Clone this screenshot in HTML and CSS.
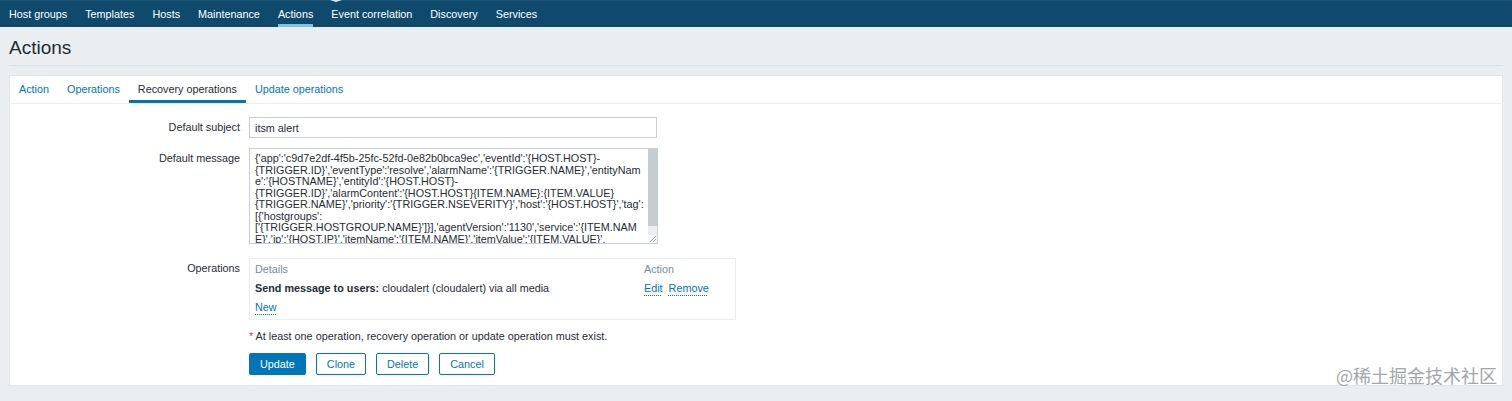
FILE: index.html
```html
<!DOCTYPE html>
<html lang="en">
<head>
<meta charset="utf-8">
<title>Actions</title>
<link rel="stylesheet" href="styles.css">
</head>
<body>
<header class="topnav">
  <span class="topnav-notch"></span>
  <nav class="topnav-list">
    <a class="topnav-item">Host groups</a>
    <a class="topnav-item">Templates</a>
    <a class="topnav-item">Hosts</a>
    <a class="topnav-item">Maintenance</a>
    <a class="topnav-item is-active">Actions</a>
    <a class="topnav-item">Event correlation</a>
    <a class="topnav-item">Discovery</a>
    <a class="topnav-item">Services</a>
  </nav>
</header>

<div class="page-header">
  <h1 class="page-title">Actions</h1>
</div>

<main class="panel">
  <ul class="tabs">
    <li class="tab">Action</li>
    <li class="tab">Operations</li>
    <li class="tab is-active">Recovery operations</li>
    <li class="tab">Update operations</li>
  </ul>

  <form class="form">
    <div class="form-row">
      <label class="form-label">Default subject</label>
      <div class="form-field"><input class="text-input" type="text" value="itsm alert"></div>
    </div>
    <div class="form-row row-message">
      <label class="form-label">Default message</label>
      <div class="form-field">
        <div class="textbox">
          <textarea class="text-area" spellcheck="false">{'app':'c9d7e2df-4f5b-25fc-52fd-0e82b0bca9ec','eventId':'{HOST.HOST}-
{TRIGGER.ID}','eventType':'resolve','alarmName':'{TRIGGER.NAME}','entityNam
e':'{HOSTNAME}','entityId':'{HOST.HOST}-
{TRIGGER.ID}','alarmContent':'{HOST.HOST}{ITEM.NAME}:{ITEM.VALUE}
{TRIGGER.NAME}','priority':'{TRIGGER.NSEVERITY}','host':'{HOST.HOST}','tag':
[{'hostgroups':
['{TRIGGER.HOSTGROUP.NAME}']}],'agentVersion':'1130','service':'{ITEM.NAM
E}','ip':'{HOST.IP}','itemName':'{ITEM.NAME}','itemValue':'{ITEM.VALUE}',
'time':'{EVENT.RECOVERY.DATE} {EVENT.RECOVERY.TIME}'}</textarea>
          <div class="scrollbar">
            <div class="scroll-thumb"></div>
            <div class="scroll-track"></div>
            <svg class="grip" width="9" height="8" viewBox="0 0 9 8">
              <path d="M8 1 L2 7 M8 4 L5 7" stroke="#9aa4aa" stroke-width="1" fill="none"/>
            </svg>
          </div>
        </div>
      </div>
    </div>
    <div class="form-row row-ops">
      <label class="form-label">Operations</label>
      <div class="form-field">
        <div class="ops-box">
          <div class="ops-line ops-head">
            <span class="ops-details">Details</span>
            <span class="ops-action">Action</span>
          </div>
          <div class="ops-line">
            <span class="ops-details"><b>Send message to users:</b> cloudalert (cloudalert) via all media</span>
            <span class="ops-action"><a class="link">Edit</a><a class="link">Remove</a></span>
          </div>
          <div class="ops-line">
            <span class="ops-details"><a class="link">New</a></span>
          </div>
        </div>
      </div>
    </div>
    <div class="form-row row-note">
      <span class="form-label"></span>
      <div class="form-field note"><span class="asterisk">*</span> At least one operation, recovery operation or update operation must exist.</div>
    </div>
    <div class="form-row row-buttons">
      <span class="form-label"></span>
      <div class="form-field buttons">
        <button type="button" class="btn btn-primary">Update</button>
        <button type="button" class="btn">Clone</button>
        <button type="button" class="btn">Delete</button>
        <button type="button" class="btn">Cancel</button>
      </div>
    </div>
  </form>
  <div class="watermark">@稀土掘金技术社区</div>
</main>
</body>
</html>
```

FILE: styles.css
```css
* { box-sizing: border-box; }

html, body {
  margin: 0;
  padding: 0;
}

body {
  background: #ebeef0;
  color: #1f2c33;
  font-family: "Liberation Sans", Arial, Helvetica, sans-serif;
  font-size: 10.8px;
  width: 1512px;
  height: 401px;
  overflow: hidden;
}

/* top navigation */
.topnav {
  position: relative;
  height: 27px;
  background: #0f4a6c;
  border-top: 1px solid #1a5374;
}

.topnav-notch {
  position: absolute;
  top: -1px;
  left: 330px;
  width: 0;
  height: 0;
  border-left: 6px solid transparent;
  border-right: 6px solid transparent;
  border-top: 2px solid #dfe6ea;
}

.topnav-list {
  display: flex;
  gap: 18px;
  padding-left: 9px;
  height: 100%;
}

.topnav-item {
  color: #ffffff;
  line-height: 26px;
  height: 26px;
  white-space: nowrap;
}

.topnav-item.is-active {
  box-shadow: inset 0 -3px 0 #7cc2e6;
}

/* page header */
.page-header {
  margin: 0 9px;
  height: 39px;
  border-bottom: 1px solid #dde2e5;
  display: flex;
  align-items: center;
}

.page-title {
  margin: 0;
  font-size: 19px;
  font-weight: normal;
  color: #1f2c33;
  line-height: 22px;
  padding-top: 3px;
}

/* panel */
.panel {
  position: relative;
  margin: 9px 9px 0;
  background: #ffffff;
  border: 1px solid #e2e6e9;
  height: 311px;
}

.tabs {
  list-style: none;
  margin: 0;
  padding: 0;
  display: flex;
  height: 28px;
  border-bottom: 1px solid #ebeef0;
}

.tab {
  padding: 0 9px;
  line-height: 27px;
  color: #0275b8;
  white-space: nowrap;
}

.tab.is-active {
  color: #1f2c33;
  box-shadow: inset 0 -3px 0 #0275b8;
  height: 27px;
}

/* form */
.form {
  padding-top: 13px;
}

.form-row {
  display: flex;
  gap: 9px;
  margin-bottom: 10px;
}

.form-label {
  width: 230px;
  flex: none;
  text-align: right;
  line-height: 21px;
  white-space: nowrap;
}

.form-field {
  flex: none;
}

.text-input {
  display: block;
  width: 408px;
  height: 21px;
  border: 1px solid #c8cfd3;
  padding: 0 5px;
  font: inherit;
  color: #1f2c33;
  background: #fff;
  outline: none;
}

.row-message {
  margin-bottom: 14px;
}

.textbox {
  display: flex;
  width: 409px;
  height: 96px;
  border: 1px solid #c8cfd3;
  background: #fff;
}

.text-area {
  flex: 1;
  min-width: 0;
  height: 100%;
  border: 0;
  padding: 4px 0 0 5px;
  font: inherit;
  line-height: 11.55px;
  color: #1f2c33;
  background: #fff;
  white-space: pre;
  overflow: hidden;
  resize: none;
  outline: none;
}

.scrollbar {
  width: 9px;
  flex: none;
  display: flex;
  flex-direction: column;
  background: #f2f4f5;
}

.scroll-thumb {
  height: 77px;
  background: #c5cdd2;
}

.scroll-track {
  flex: 1;
  background: #eceff0;
}

.grip {
  display: block;
  flex: none;
  background: #f6f7f8;
}

/* operations */
.row-ops {
  margin-bottom: 10px;
}

.ops-box {
  width: 487px;
  border: 1px solid #ebeef0;
  padding: 1px 5px 2px;
}

.ops-line {
  display: flex;
  line-height: 19px;
  height: 19px;
}

.ops-details {
  width: 389px;
  flex: none;
  white-space: nowrap;
}

.ops-action {
  display: flex;
  gap: 6px;
  white-space: nowrap;
}

.ops-head {
  color: #768d99;
}

.link {
  color: #0275b8;
  text-decoration: underline dotted #0275b8;
  text-underline-offset: 3px;
  text-decoration-thickness: 1px;
}

.note {
  line-height: 13px;
}

.row-note {
  margin-bottom: 10px;
}

.row-note .form-label {
  line-height: 13px;
}

.asterisk {
  color: #e33734;
}

/* buttons */
.buttons {
  display: flex;
  gap: 10px;
}

.btn {
  height: 22px;
  padding: 0 10px;
  font: inherit;
  color: #0275b8;
  background: #ffffff;
  border: 1px solid #0275b8;
  border-radius: 2px;
  cursor: pointer;
}

.btn-primary {
  background: #0275b8;
  color: #ffffff;
}

/* watermark */
.watermark {
  position: absolute;
  right: 5px;
  bottom: 0;
  font-family: "Noto Sans CJK SC", "Liberation Sans", sans-serif;
  font-size: 18px;
  line-height: 20px;
  color: #a2a6aa;
  text-shadow: 0 0 2px #ffffff;
  white-space: nowrap;
}
```
